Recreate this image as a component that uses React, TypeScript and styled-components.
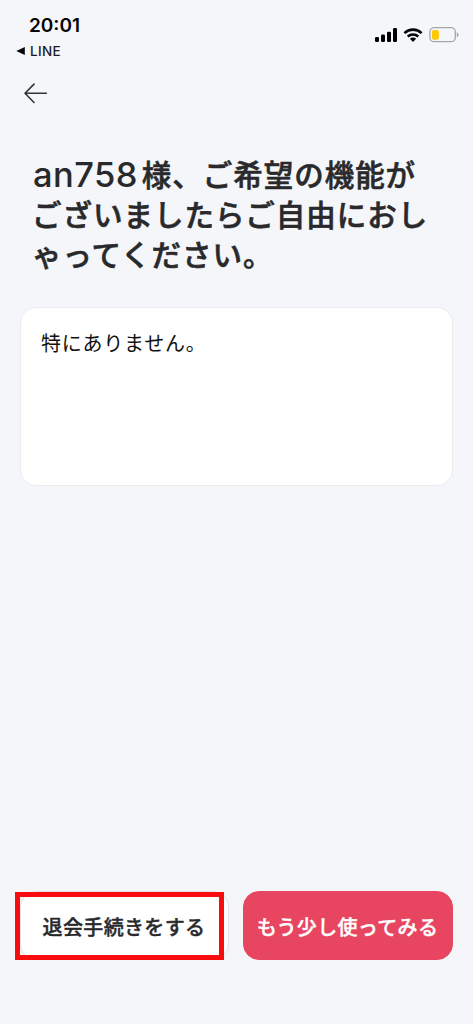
import React from "react";
import styled, { createGlobalStyle } from "styled-components";

const GlobalStyle = createGlobalStyle`
  * { box-sizing: border-box; }
  body { margin: 0; background: #f4f6fa; }
`;

const Screen = styled.div`
  display: flex;
  flex-direction: column;
  width: 473px;
  height: 1024px;
  background: #f4f6fa;
  color: #29292b;
  font-family: Inter, "Noto Sans CJK JP", sans-serif;
`;

const StatusBar = styled.header`
  display: flex;
  justify-content: space-between;
  height: 70px;
  padding: 14px 14px 0 16px;
  color: #050505;
`;

const StatusLeft = styled.div`
  display: flex;
  flex-direction: column;
`;

const Time = styled.div`
  padding-left: 13px;
  font-size: 19px;
  font-weight: 600;
  line-height: 24px;
`;

const BackApp = styled.div`
  display: flex;
  align-items: center;
  gap: 5px;
  margin-top: 4px;
  font-size: 13.5px;
  line-height: 18px;
  font-weight: 500;
  letter-spacing: 0.3px;
  color: #1c1c1e;
`;

const StatusIcons = styled.div`
  display: flex;
  align-items: center;
  gap: 6px;
  height: 16px;
  margin-top: 13px;
`;

const NavBar = styled.nav`
  display: flex;
  height: 46px;
  padding: 12px 24px 0;
`;

const BackButton = styled.button`
  display: flex;
  padding: 0;
  height: 22px;
  border: 0;
  background: none;
`;

const Heading = styled.h1`
  margin: 39px 0 0;
  padding: 0 32px;
  font-size: 29.5px;
  font-weight: 500;
  -webkit-text-stroke: 0.6px currentColor;
  line-height: 40px;
  letter-spacing: 0.98px;
  white-space: nowrap;
`;

const Line = styled.span`
  display: flex;
  height: 40px;
`;

const UserName = styled.span`
  margin: 0 4px 0 1px;
  font-size: 34.5px;
  font-weight: 450;
  letter-spacing: 0.4px;
  -webkit-text-stroke: 0;
`;

const AnswerBox = styled.section`
  height: 179px;
  margin: 32px 20px 0;
  padding: 20px 20px;
  border: 1px solid #ececef;
  border-radius: 16px;
  background: #fff;
  color: #111;
  font-size: 20px;
  line-height: 32px;
  letter-spacing: 0.75px;
`;

const Actions = styled.footer`
  display: flex;
  gap: 14px;
  margin-top: auto;
  padding: 0 20px 64px;
`;

const Button = styled.button<{ $primary?: boolean }>`
  flex: 1 1 0;
  height: 69px;
  padding: 2px 1px 0 0;
  border: 1px solid ${(p) => (p.$primary ? "#e74560" : "#e2e2e6")};
  border-radius: 16px;
  background: ${(p) => (p.$primary ? "#e74560" : "#fff")};
  color: ${(p) => (p.$primary ? "#fff" : "#29292b")};
  font-family: inherit;
  font-size: 20px;
  font-weight: 500;
  -webkit-text-stroke: 0.4px currentColor;
  letter-spacing: 0.35px;
  white-space: nowrap;
`;

const ActionSlot = styled.div`
  position: relative;
  display: flex;
  flex: 0 0 209px;
`;

const Highlight = styled.div`
  position: absolute;
  top: 1px;
  left: -5px;
  width: 209px;
  height: 68px;
  border: 5px solid #f80c0e;
  pointer-events: none;
`;

const SignalIcon = () => (
  <svg width="22" height="14" viewBox="0 0 22 14">
    <rect x="0" y="9" width="4" height="5" rx="1.2" />
    <rect x="6" y="6.6" width="4" height="7.4" rx="1.2" />
    <rect x="12" y="3.8" width="4" height="10.2" rx="1.2" />
    <rect x="18" y="0" width="4" height="14" rx="1.2" />
  </svg>
);

const WifiIcon = () => (
  <svg width="20" height="14" viewBox="0 0 20 14" fill="none" stroke="#050505">
    <path d="M1.4 5.1C6.2.5 13.8.5 18.6 5.1" strokeWidth="2.6" />
    <path d="M4.7 8.5c3-2.8 7.6-2.8 10.6 0" strokeWidth="2.5" />
    <path d="M10 14 6.9 10.8c1.8-1.6 4.4-1.6 6.2 0Z" fill="#050505" stroke="none" />
  </svg>
);

const BatteryIcon = () => (
  <svg width="30" height="16" viewBox="0 0 30 16">
    <rect x=".9" y=".7" width="25.4" height="14" rx="4.3" fill="none" stroke="#a5a6aa" strokeWidth="1.3" />
    <rect x="2.9" y="2.9" width="7" height="9.8" rx="2.2" fill="#fdc901" />
    <path d="M27.8 5.3c2.3.9 2.3 3.9 0 4.8Z" fill="#a5a6aa" />
  </svg>
);

export default function App() {
  return (
    <Screen>
      <GlobalStyle />
      <StatusBar>
        <StatusLeft>
          <Time>20:01</Time>
          <BackApp>
            <svg width="9" height="8" viewBox="0 0 9 8">
              <path d="M.3 4 8.8 0v8Z" fill="#050505" />
            </svg>
            LINE
          </BackApp>
        </StatusLeft>
        <StatusIcons>
          <SignalIcon />
          <WifiIcon />
          <BatteryIcon />
        </StatusIcons>
      </StatusBar>
      <NavBar>
        <BackButton aria-label="戻る">
          <svg width="24" height="22" viewBox="0 0 24 22" fill="none" stroke="#343436" strokeWidth="1.6" strokeLinecap="round" strokeLinejoin="round">
            <path d="M22.4 11.3H1M10 2.1 1 11.3l9 9.2" />
          </svg>
        </BackButton>
      </NavBar>
      <Heading>
        <Line><UserName>an758</UserName>様、ご希望の機能が</Line>
        <Line>ございましたらご自由におし</Line>
        <Line>ゃってください。</Line>
      </Heading>
      <AnswerBox>特にありません。</AnswerBox>
      <Actions>
        <ActionSlot>
          <Button>退会手続きをする</Button>
          <Highlight />
        </ActionSlot>
        <Button $primary>もう少し使ってみる</Button>
      </Actions>
    </Screen>
  );
}
